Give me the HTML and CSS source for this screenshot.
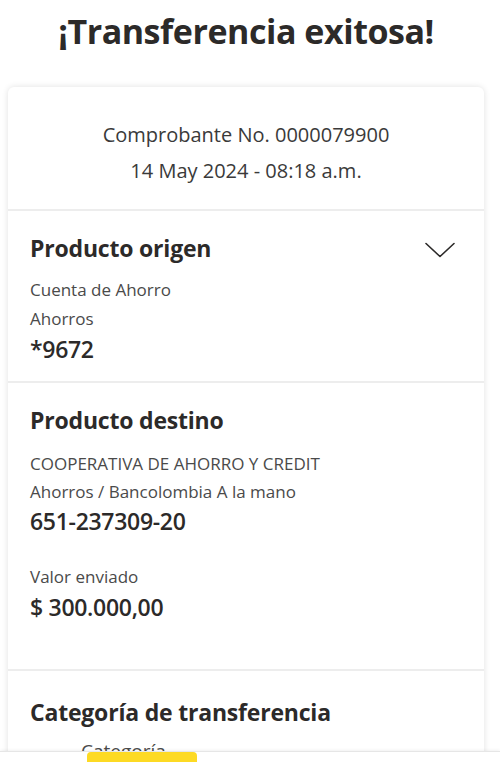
FILE: index.html
```html
<!DOCTYPE html>
<html>
<head>
	<title>Transferencia exitosa</title>
	<meta charset="utf-8"/>
	<link rel="stylesheet" href="styles.css">
</head>
<body>

<div class="page">
	<h1 class="title">¡Transferencia exitosa!</h1>

	<div class="card">
		<div class="receipt">
			<p>Comprobante No. 0000079900</p>
			<p>14 May 2024 - 08:18 a.m.</p>
		</div>

		<div class="section origin">
			<div class="head">
				<h2>Producto origen</h2>
				<svg class="chevron" width="30" height="16" viewBox="0 0 30 16">
					<path d="M1 1.5 L15 14.5 L29 1.5" fill="none" stroke="#2c2a29" stroke-width="1.6" stroke-linecap="round" stroke-linejoin="round"/>
				</svg>
			</div>
			<p class="first">Cuenta de Ahorro</p>
			<p>Ahorros</p>
			<p class="number">*9672</p>
		</div>

		<div class="section destiny">
			<div class="head">
				<h2>Producto destino</h2>
			</div>
			<p class="first">COOPERATIVA DE AHORRO Y CREDIT</p>
			<p class="tight">Ahorros / Bancolombia A la mano</p>
			<p class="number">651-237309-20</p>
			<p class="label">Valor enviado</p>
			<p class="number">$ 300.000,00</p>
		</div>

		<div class="section category">
			<div class="head">
				<h2>Categoría de transferencia</h2>
			</div>
			<p class="sub">Categoría</p>
		</div>
	</div>
</div>

<!-- barra inferior fija -->
<div class="footer">
	<button class="btn"></button>
</div>

</body>
</html>
```

FILE: styles.css
```css
* {
	margin: 0px;
	padding: 0px;
	box-sizing: border-box;
}

body {
	font-family: "Open Sans", "Liberation Sans", sans-serif;
	background-color: #ffffff;
	color: #2c2a29;
	overflow: hidden;
}

.page {
	width: 492px;
	padding-top: 11px;
}

.title {
	font-size: 34px;
	font-weight: 700;
	line-height: 41px;
	text-align: center;
	letter-spacing: -0.45px;
	color: #2c2a29;
}

.card {
	margin: 35px 0 0 8px;
	width: 476px;
	background-color: #ffffff;
	border-radius: 6px;
	box-shadow: 0 0 6px rgba(0, 0, 0, 0.12);
}

.receipt {
	padding: 30px 0 20px;
	text-align: center;
	font-size: 20px;
	line-height: 36px;
	color: #3a3a3a;
	border-bottom: 2px solid #ededed;
}

.section {
	padding: 22px 29px 0 22px;
	border-bottom: 2px solid #ededed;
}
	.section .head {
		display: flex;
		justify-content: space-between;
		align-items: center;
	}
	.section h2 {
		font-size: 23px;
		font-weight: 700;
		line-height: 30px;
		letter-spacing: -0.2px;
	}
	.chevron {
		margin-top: 4px;
	}
	.section p {
		font-size: 17px;
		line-height: 29px;
		color: #4a4a4a;
	}
	.section p.first {
		margin-top: 12px;
	}
	.section p.number {
		font-size: 23px;
		font-weight: 600;
		line-height: 33px;
		color: #2c2a29;
		letter-spacing: -0.3px;
	}
	.section p.label {
		margin-top: 24px;
	}

.origin {
	height: 172px;
}
.destiny {
	height: 288px;
}
.destiny p.first {
	margin-top: 14px;
}
.destiny p.tight {
	line-height: 27px;
}
.category {
	padding-top: 26px;
	border-bottom: none;
	height: 120px;
}
.category p.sub {
	margin: 10px 0 0 51px;
	font-size: 19px;
}

.footer {
	position: fixed;
	left: 0px;
	bottom: 0px;
	width: 100%;
	height: 11px;
	background-color: #ffffff;
	border-top: 1px solid #e6e6e6;
	box-shadow: 0 -1px 3px rgba(0, 0, 0, 0.06);
}
	.btn {
		display: block;
		margin-left: 87px;
		width: 110px;
		height: 30px;
		border: none;
		border-radius: 4px 4px 0 0;
		background-color: #fdda24;
	}
```
